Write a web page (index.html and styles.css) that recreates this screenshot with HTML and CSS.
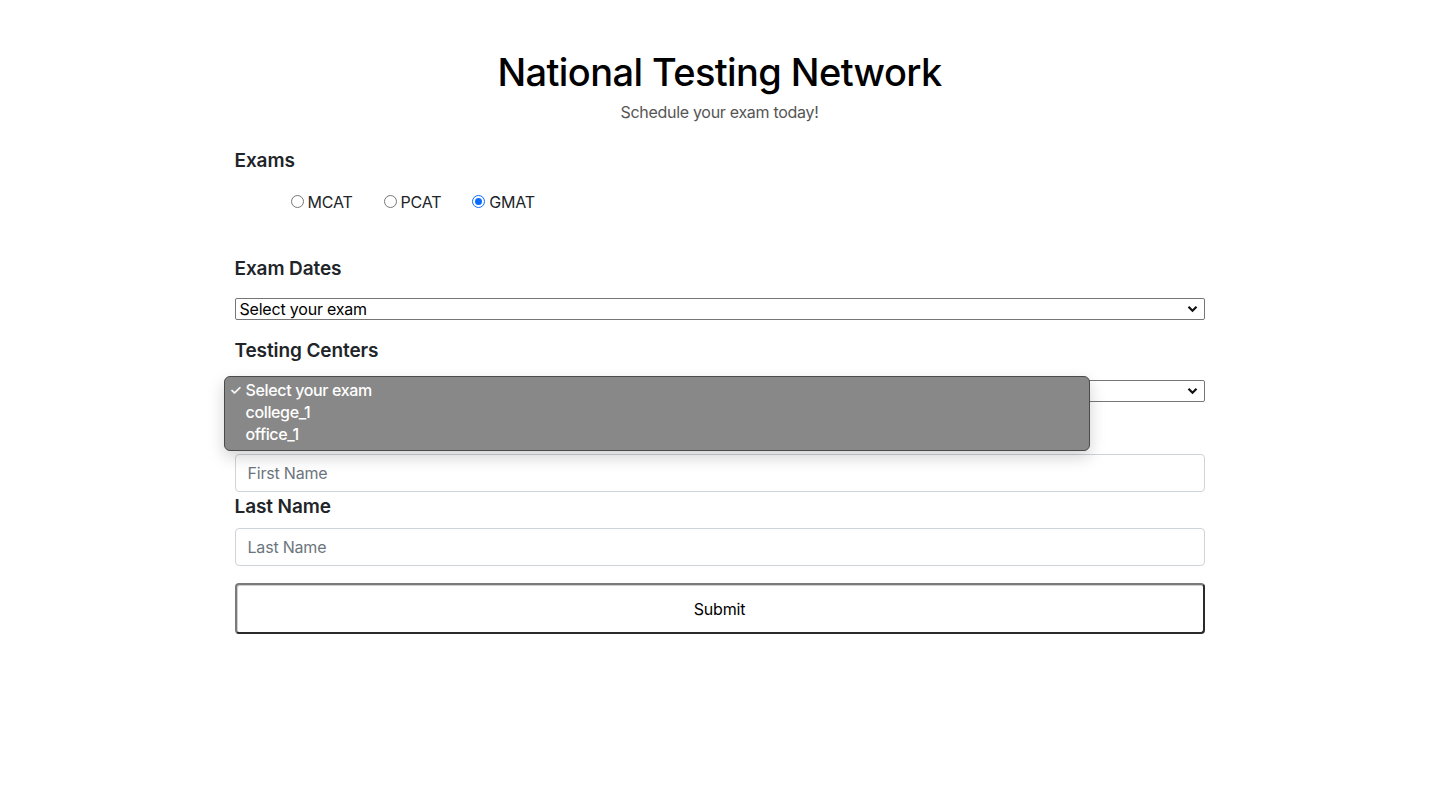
FILE: index.html
```html
<!DOCTYPE html>
<html lang="en">
<head>
<meta charset="utf-8">
<title>National Testing Network</title>
<link rel="stylesheet" href="styles.css">
</head>
<body>
<header class="hero">
  <h1 class="title">National Testing Network</h1>
  <p class="subtitle">Schedule your exam today!</p>
</header>
<form class="container">
  <div class="group">
    <h5 class="label">Exams</h5>
    <div class="radios">
      <label class="radio"><span class="dot"></span>MCAT</label>
      <label class="radio"><span class="dot"></span>PCAT</label>
      <label class="radio"><span class="dot on"></span>GMAT</label>
    </div>
  </div>
  <div class="group dates">
    <h5 class="label">Exam Dates</h5>
    <div class="select"><span>Select your exam</span>
      <svg class="chev" width="11" height="8" viewBox="0 0 11 8"><path d="M1.5 1.8 L5.5 5.8 L9.5 1.8" fill="none" stroke="#111" stroke-width="2.2"/></svg>
    </div>
  </div>
  <div class="group centers">
    <h5 class="label">Testing Centers</h5>
    <div class="select"><span class="covered">Select your exam</span>
      <svg class="chev" width="11" height="8" viewBox="0 0 11 8"><path d="M1.5 1.8 L5.5 5.8 L9.5 1.8" fill="none" stroke="#111" stroke-width="2.2"/></svg>
    </div>
    <div class="menu">
      <div class="opt"><span class="check">✓</span>Select your exam</div>
      <div class="opt">college_1</div>
      <div class="opt">office_1</div>
    </div>
  </div>
  <div class="group name">
    <h5 class="label covered">First Name</h5>
    <input class="input" type="text" placeholder="First Name">
  </div>
  <div class="group name2">
    <h5 class="label">Last Name</h5>
    <input class="input" type="text" placeholder="Last Name">
  </div>
  <button class="submit" type="button">Submit</button>
</form>
</body>
</html>
```
FILE: styles.css
```css
* { box-sizing: border-box; }
body {
  margin: 0;
  font-family: Inter, "Liberation Sans", sans-serif;
  color: #212529;
  background: #fff;
}
.hero {
  text-align: center;
  padding-top: 48px;
}
.title {
  margin: 0;
  font-size: 38px;
  line-height: 48px;
  font-weight: 500;
  color: #000;
  letter-spacing: -0.6px;
}
.subtitle {
  margin: 4px 0 0;
  font-size: 16px;
  line-height: 24px;
  color: #555;
  letter-spacing: -0.3px;
}
.container {
  width: 970px;
  margin: 24px auto 0;
  display: flex;
  flex-direction: column;
}
.group { position: relative; }
.label {
  margin: 0;
  padding-top: 1px;
  font-size: 19px;
  line-height: 24px;
  font-weight: 600;
  color: #212529;
  letter-spacing: -0.1px;
}
.covered { visibility: hidden; }
.radios {
  display: flex;
  padding: 17px 0 0 56px;
  height: 65px;
  font-size: 16px;
  line-height: 24px;
  letter-spacing: -0.2px;
}
.radio {
  display: flex;
  align-items: center;
  margin-right: 31px;
  height: 24px;
}
.dot {
  width: 13px;
  height: 13px;
  border: 1px solid #767676;
  border-radius: 50%;
  margin-right: 4px;
  position: relative;
  top: -1px;
}
.dot.on {
  border-color: #0a6cff;
  background: #fff;
}
.dot.on::after {
  content: "";
  position: absolute;
  left: 2px; top: 2px;
  width: 7px; height: 7px;
  border-radius: 50%;
  background: #0a6cff;
}
.dates { margin-top: 18px; }
.select {
  margin-top: 17px;
  height: 22px;
  border: 1px solid #767676;
  border-radius: 2px;
  display: flex;
  align-items: center;
  justify-content: space-between;
  padding: 0 6px 0 4px;
  font-size: 16px;
  color: #000;
  letter-spacing: -0.2px;
}
.centers { margin-top: 18px; }
.menu {
  position: absolute;
  left: -11px;
  top: 38px;
  width: 866px;
  height: 75px;
  background: #888;
  border: 1px solid #4a4a4a;
  border-radius: 6px;
  box-shadow: 0 6px 16px rgba(0,0,0,0.18);
  padding: 2px 0 0 0;
  color: #fff;
  font-size: 16px;
  font-weight: 500;
  letter-spacing: -0.35px;
  z-index: 2;
}
.opt {
  height: 22px;
  line-height: 22px;
  padding-left: 21px;
  position: relative;
}
.check {
  position: absolute;
  left: 5px;
  font-size: 14px;
}
.name { margin-top: 18px; }
.name2 { margin-top: 2px; }
.input {
  display: block;
  width: 100%;
  height: 38px;
  margin-top: 9px;
  border: 1px solid #ced4da;
  border-radius: 4px;
  padding: 0 12px;
  font-family: inherit;
  font-size: 16px;
  color: #212529;
  letter-spacing: -0.2px;
}
.input::placeholder { color: #6c757d; }
.submit {
  margin-top: 17px;
  height: 51px;
  width: 100%;
  background: #fff;
  border: 2px solid;
  border-color: #7a7a7a #2a2a2a #2a2a2a #7a7a7a;
  border-radius: 4px;
  box-shadow: inset 1px 1px 0 #cfcfcf;
  font-family: inherit;
  font-size: 16px;
  color: #000;
  letter-spacing: -0.2px;
}
```
